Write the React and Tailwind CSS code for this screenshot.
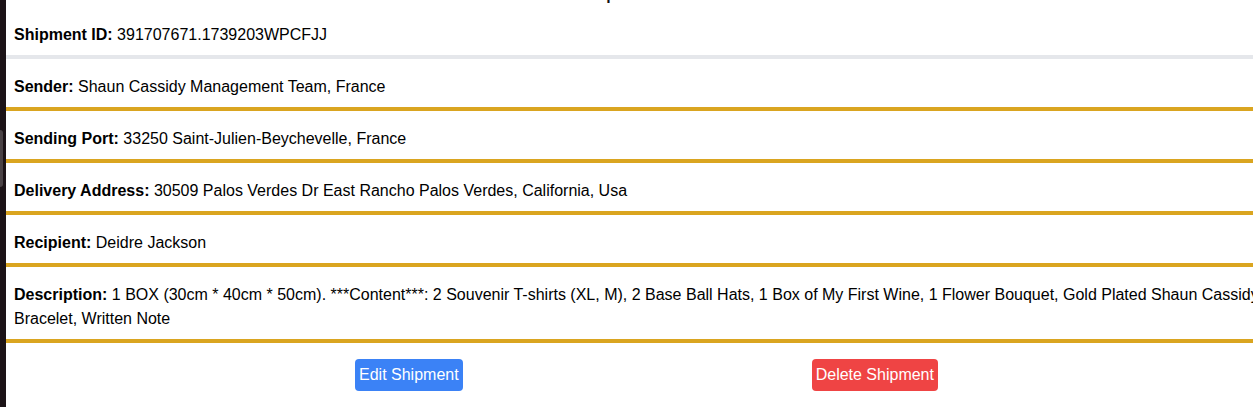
const details = [
  { label: 'Sender', value: 'Shaun Cassidy Management Team, France' },
  { label: 'Sending Port', value: '33250 Saint-Julien-Beychevelle, France' },
  { label: 'Delivery Address', value: '30509 Palos Verdes Dr East Rancho Palos Verdes, California, Usa' },
  { label: 'Recipient', value: 'Deidre Jackson' },
  {
    label: 'Description',
    value:
      '1 BOX (30cm * 40cm * 50cm). ***Content***: 2 Souvenir T-shirts (XL, M), 2 Base Ball Hats, 1 Box of My First Wine, 1 Flower Bouquet, Gold Plated Shaun Cassidy Bracelet, Written Note',
  },
]

export default function App() {
  return (
    <div className="flex h-[407px] overflow-hidden bg-white text-black font-['Liberation_Sans',Arial,sans-serif]">
      {/* window edge */}
      <div className="w-[6px] shrink-0 bg-[#1c1317] pt-[130px]">
        <div className="h-[57px] w-[3px] rounded-r-sm bg-[#4a4245]" />
      </div>

      <div className="w-[1281px] shrink-0">
        <h1 className="-mt-[26px] mb-[1px] h-[32px] pl-[565px] text-2xl leading-8 text-[#111]">
          Shipment Details
        </h1>

        <div className="border-b-4 border-[#e5e7eb] px-2 pt-4 pb-2 text-base leading-6">
          <span className="font-bold">Shipment ID:</span> 391707671.1739203WPCFJJ
        </div>

        {details.map((d) => (
          <div key={d.label} className="border-b-4 border-[#daa520] px-2 pt-4 pb-2 text-base leading-6">
            <span className="font-bold">{d.label}:</span> {d.value}
          </div>
        ))}

        <div className="mt-4 flex justify-evenly">
          <button className="rounded bg-[#3b82f6] px-1 py-1 text-base leading-6 text-white">
            Edit Shipment
          </button>
          <button className="rounded bg-[#ef4444] px-1 py-1 text-base leading-6 text-white">
            Delete Shipment
          </button>
        </div>
      </div>
    </div>
  )
}
